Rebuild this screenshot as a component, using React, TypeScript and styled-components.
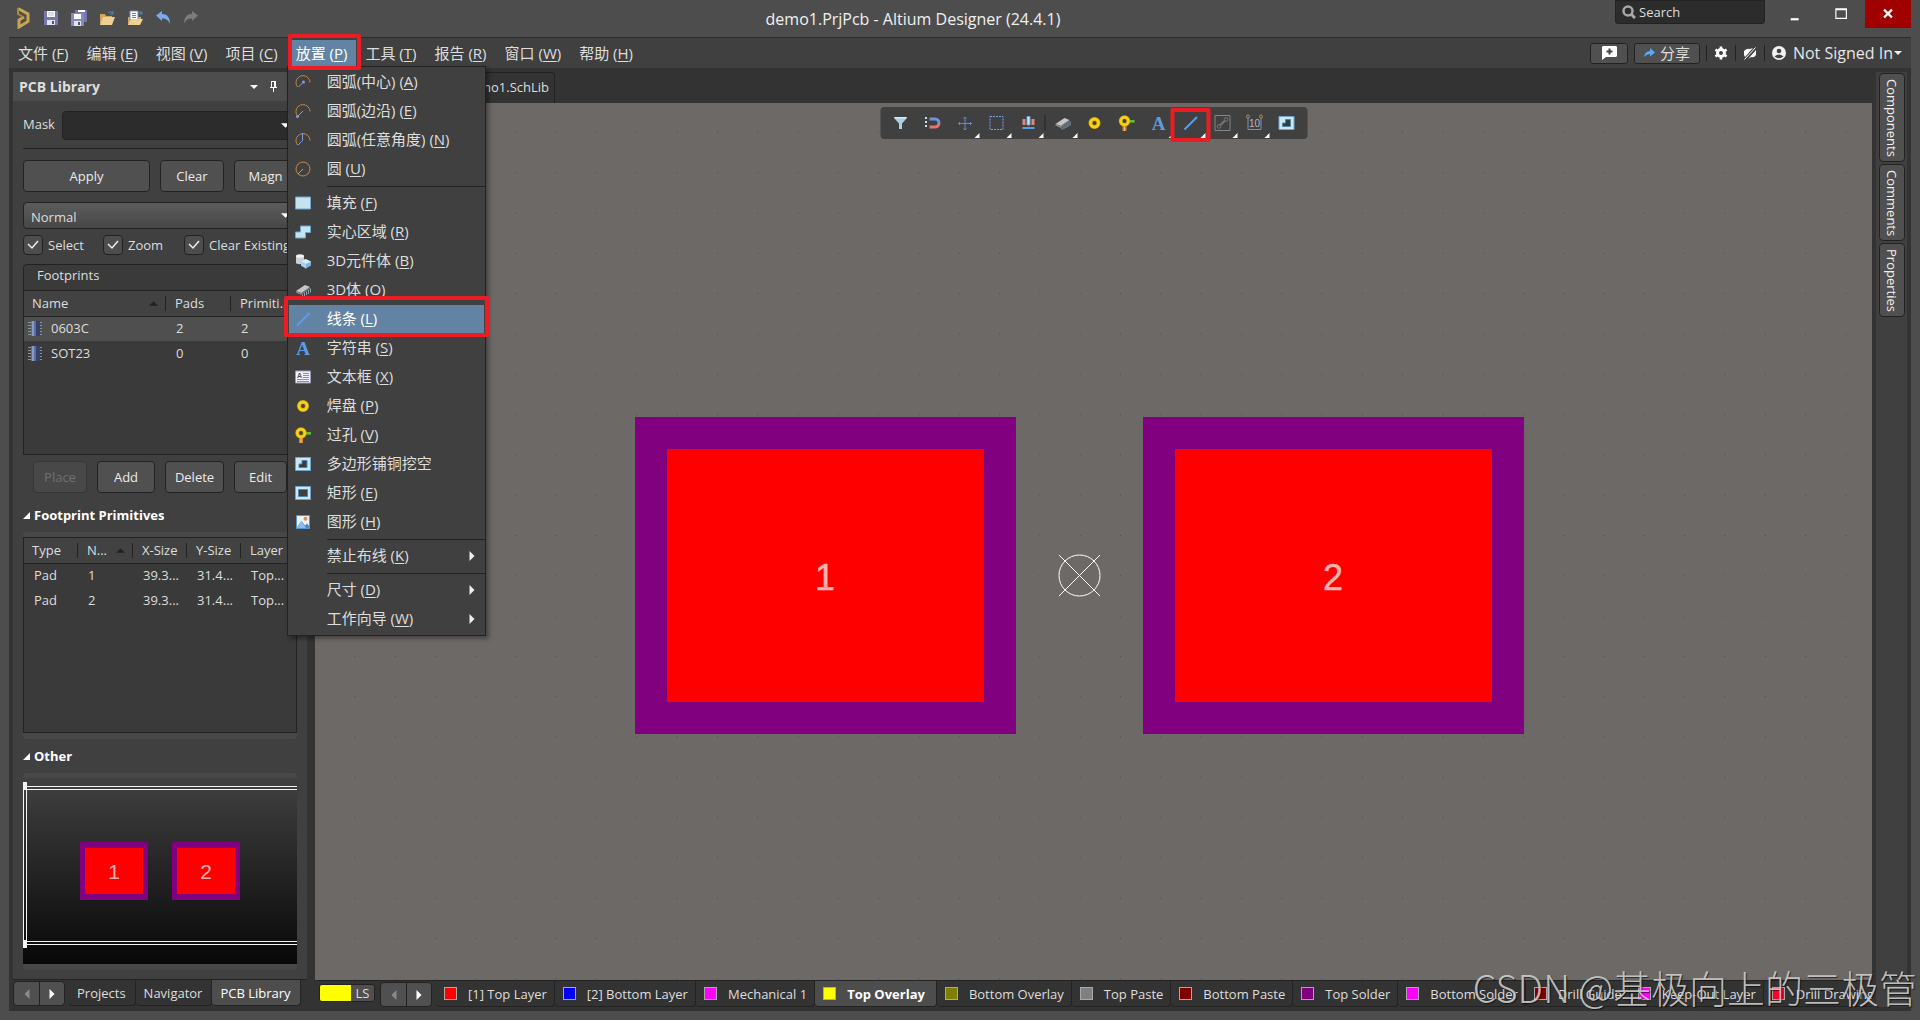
import React from "react";
import styled, { createGlobalStyle, css } from "styled-components";

const c = {
  frame: "#4d4d4d",
  bar: "#404040",
  dark: "#333333",
  line: "#222222",
  field: "#2c2c2c",
  table: "#3a3a3a",
  button: "#505050",
  text: "#dedede",
  hot: "#6283a3",
  mark: "#ed1c24",
};

const GlobalStyle = createGlobalStyle`
  * { box-sizing: border-box; }
  body { margin: 0; background: ${c.frame}; }
  body, button, input, select, table {
    font-family: "Open Sans", "Noto Sans CJK SC", sans-serif;
    font-size: 13px;
    line-height: 20px;
    color: ${c.text};
  }
  button { padding: 0; border: 0; background: none; cursor: default; }
  svg { display: block; flex: none; }
  u { text-underline-offset: 2px; }
`;

/* ---------- frame ---------- */

const Window = styled.div`
  display: flex;
  flex-direction: column;
  height: 100vh;
  min-height: 900px;
  padding: 0 9px 9px;
  background: ${c.frame};
  overflow: hidden;
  position: relative;
`;

const TitleBar = styled.header`
  display: flex;
  align-items: flex-start;
  height: 37px;
`;

const QuickTools = styled.div`
  display: flex;
  align-items: center;
  gap: 12px;
  height: 36px;
  padding: 0 12px 0 6px;
`;

const IconButton = styled.button`
  display: grid;
  place-items: center;
`;

const Title = styled.h1`
  flex: 1;
  margin: 0;
  font-size: 16px;
  font-weight: 400;
  line-height: 38px;
  text-align: center;
  color: #f0f0f0;
`;

const SearchBox = styled.label`
  display: flex;
  align-items: center;
  gap: 3px;
  width: 150px;
  height: 24px;
  padding: 0 6px;
  background: ${c.field};
  border: 1px solid ${c.line};
  border-radius: 0 0 3px 3px;
  input {
    min-width: 0;
    flex: 1;
    padding: 0;
    border: 0;
    outline: 0;
    background: none;
    line-height: 20px;
  }
  input::placeholder { color: ${c.text}; opacity: 1; }
`;

const WindowButtons = styled.div`
  display: flex;
  margin-left: 8px;
`;

const WindowButton = styled.button<{ $close?: boolean }>`
  display: grid;
  place-items: center;
  width: 46px;
  height: 28px;
  background: ${(p) => (p.$close ? "#a00000" : "none")};
`;

const MenuBar = styled.nav`
  display: flex;
  align-items: center;
  gap: 5px;
  height: 31px;
  padding: 0 6px 0 5px;
  background: ${c.bar};
  border-top: 1px solid #2c2c2c;
`;

const MenuSlot = styled.div`
  position: relative;
`;

const MenuTitle = styled.button<{ $open?: boolean }>`
  display: block;
  height: 26px;
  padding: 0 9px 0 4px;
  font-size: 15px;
  line-height: 26px;
  white-space: nowrap;
  background: ${(p) => (p.$open ? c.hot : "none")};
  color: ${(p) => (p.$open ? "#fff" : c.text)};
`;

const Mark = styled.span<{ $inset: string; $w?: number }>`
  position: absolute;
  z-index: 5;
  inset: ${(p) => p.$inset};
  border: ${(p) => p.$w ?? 4}px solid ${c.mark};
  border-radius: 2px;
  pointer-events: none;
`;

const Popup = styled.ul`
  position: absolute;
  z-index: 4;
  top: 100%;
  left: -5px;
  width: 199px;
  margin: 0;
  padding: 1px 0;
  list-style: none;
  background: ${c.bar};
  border: 1px solid ${c.line};
  box-shadow: 3px 3px 4px rgba(0, 0, 0, 0.35);
`;

const PopupRow = styled.li`
  position: relative;
`;

const PopupItem = styled.button<{ $active?: boolean }>`
  display: grid;
  grid-template-columns: 16px 1fr 6px;
  column-gap: 16px;
  align-items: center;
  width: 195px;
  height: 29px;
  margin: 0 1px;
  padding: 0 11px 2px 6px;
  font-size: 15px;
  line-height: 27px;
  text-align: left;
  white-space: nowrap;
  background: ${(p) => (p.$active ? c.hot : "none")};
  color: ${(p) => (p.$active ? "#fff" : c.text)};
`;

const PopupRule = styled.li`
  height: 1px;
  margin: 2px 0 2px 39px;
  background: ${c.line};
`;

const Account = styled.div`
  display: flex;
  align-items: center;
  margin-left: auto;
`;

const SmallButton = styled.button`
  display: flex;
  align-items: center;
  justify-content: center;
  gap: 5px;
  height: 21px;
  margin-right: 6px;
  padding: 0 9px;
  font-size: 15px;
  line-height: 19px;
  background: ${c.button};
  border: 1px solid ${c.line};
  border-radius: 3px;
`;

const AccountItem = styled.button`
  display: flex;
  align-items: center;
  gap: 7px;
  height: 16px;
  padding: 0 7px;
  border-left: 1px solid ${c.line};
  font-size: 16px;
  color: #e6e6e6;
  &:last-child { padding-right: 3px; }
`;

const AccountName = styled.span`
  display: flex;
  align-items: center;
  gap: 1px;
`;

const Work = styled.main`
  flex: 1;
  display: flex;
  min-height: 0;
  padding: 0 4px;
  background: ${c.dark};
`;

/* ---------- library panel ---------- */

const Panel = styled.section`
  display: flex;
  flex-direction: column;
  width: 294px;
  flex: none;
  margin: 4px 8px 5px 0;
`;

const PanelHead = styled.header`
  display: flex;
  align-items: center;
  gap: 12px;
  height: 29px;
  padding: 0 30px 0 6px;
  background: ${c.frame};
  h2 { flex: 1; margin: 0; font-size: 14px; font-weight: 700; }
`;

const PanelBody = styled.div`
  flex: 1;
  display: flex;
  flex-direction: column;
  min-height: 0;
  padding: 10px 10px 9px;
  background: ${c.bar};
`;

const MaskRow = styled.div`
  display: grid;
  grid-template-columns: 39px 1fr;
  line-height: 26px;
`;

const Combo = styled.div`
  display: grid;
  align-items: center;
  > * { grid-area: 1 / 1; }
  > svg { justify-self: end; margin-right: 7px; pointer-events: none; }
`;

const fieldShape = css`
  width: 100%;
  border: 1px solid ${c.line};
  border-radius: 4px;
  outline: 0;
`;

const TextField = styled.input`
  ${fieldShape}
  height: 29px;
  padding: 0 8px;
  background: ${c.field};
`;

const Select = styled.select`
  ${fieldShape}
  appearance: none;
  height: 27px;
  padding: 2px 7px 0;
  background: linear-gradient(#5c5c5c, #474747);
`;

const Rule = styled.hr`
  width: 100%;
  height: 1px;
  margin: 8px 0 11px;
  border: 0;
  background: ${c.line};
`;

const ButtonGrid = styled.div<{ $cols: string; $inset?: boolean }>`
  display: grid;
  grid-template-columns: ${(p) => p.$cols};
  gap: 10px;
  margin: ${(p) => (p.$inset ? "6px 10px 5px" : "0 0 10px")};
`;

const Button = styled.button`
  height: 32px;
  overflow: hidden;
  background: ${c.button};
  border: 1px solid ${c.line};
  border-radius: 4px;
  color: #ececec;
  &:disabled { background: #484848; border-color: #363636; color: #707070; }
`;

const Checks = styled.div`
  display: grid;
  grid-template-columns: 80px 81px 1fr;
  margin: 6px 0 9px;
`;

const CheckLabel = styled.label`
  display: flex;
  align-items: center;
  gap: 5px;
  white-space: nowrap;
`;

const Tick = styled.span`
  display: grid;
  place-items: center;
  > * { grid-area: 1 / 1; }
  input {
    appearance: none;
    width: 20px;
    height: 20px;
    margin: 0;
    background: ${c.frame};
    border: 1px solid ${c.line};
    border-radius: 4px;
  }
  svg { pointer-events: none; }
`;

const Group = styled.div`
  height: 191px;
  background: ${c.table};
  border: 1px solid ${c.line};
  border-radius: 4px 4px 0 0;
`;

const GroupTitle = styled.div`
  height: 26px;
  padding: 0 13px;
  line-height: 21px;
  border-bottom: 1px solid ${c.line};
`;

const Grid = styled.table`
  width: 100%;
  table-layout: fixed;
  border-collapse: collapse;
  th, td {
    height: 25px;
    padding: 0 0 0 9px;
    text-align: left;
    font-weight: 400;
    white-space: nowrap;
    overflow: hidden;
  }
  th {
    border-bottom: 1px solid ${c.line};
    background: linear-gradient(${c.line}, ${c.line}) right center / 1px 15px no-repeat #424242;
  }
  th:first-child { padding-left: 8px; }
  th:last-child { background: #424242; }
  td { padding: 0 0 1px 10px; }
`;

const GridRow = styled.tr<{ $selected?: boolean }>`
  background: ${(p) => (p.$selected ? "#4f4f4f" : "none")};
`;

const SortHead = styled.span`
  display: flex;
  align-items: center;
  justify-content: space-between;
  padding-right: 8px;
`;

const NameCell = styled.span`
  display: flex;
  align-items: center;
  gap: 8px;
  margin-left: -7px;
`;

const Heading = styled.h3`
  display: flex;
  align-items: center;
  gap: 4px;
  height: 34px;
  margin: 0;
  font-size: 13px;
  font-weight: 700;
  color: #fff;
`;

const Shell = styled.div<{ $grow?: boolean }>`
  display: flex;
  flex: ${(p) => (p.$grow ? "1" : "none")};
  min-height: 0;
  padding: 5px 0 6px;
  background: #484848;
  border-radius: 4px;
`;

const GridFrame = styled.div`
  flex: 1;
  background: ${c.table};
  border: 1px solid ${c.line};
`;

const SideTabs = styled.div`
  display: flex;
  height: 27px;
  border-top: 1px solid ${c.line};
`;

const Steps = styled.div`
  display: grid;
  grid-template-columns: 1fr 1fr;
  width: 52px;
  flex: none;
  height: 25px;
  margin: 1px 4px 0 0;
  background: ${c.button};
  border: 1px solid ${c.line};
  border-radius: 4px;
  button + button { border-left: 1px solid ${c.line}; }
`;

const tabShape = css<{ $active?: boolean }>`
  flex: none;
  border: 1px solid ${c.line};
  border-top: 0;
  border-left: 0;
  border-radius: 0 0 4px 4px;
  white-space: nowrap;
  background: ${(p) => (p.$active ? c.frame : c.dark)};
  color: ${(p) => (p.$active ? "#fff" : c.text)};
`;

const SideTab = styled.button<{ $active?: boolean }>`
  ${tabShape}
  padding: 0 9px 0 8px;
`;

/* ---------- editor ---------- */

const Editor = styled.section`
  flex: 1;
  display: flex;
  flex-direction: column;
  min-width: 0;
`;

const DocTabs = styled.div`
  display: flex;
  height: 35px;
  padding-top: 4px;
`;

const DocTab = styled.button`
  width: 240px;
  height: 31px;
  padding: 0 5px 2px;
  text-align: right;
  border: 1px solid ${c.line};
  border-bottom: 0;
  border-radius: 4px 4px 0 0;
`;

const Canvas = styled.div`
  flex: 1;
  position: relative;
  min-height: 0;
  background: #6d6967;
  overflow: hidden;
  > svg { width: 100%; height: 100%; }
`;

const FloatBar = styled.div`
  position: absolute;
  top: 4px;
  left: 50%;
  transform: translateX(-50%);
  display: flex;
  align-items: center;
  height: 32px;
  padding: 0 5px 0 4px;
  background: ${c.bar};
  border-radius: 4px;
`;

const FloatTool = styled.button`
  position: relative;
  display: grid;
  place-items: center;
  width: 32px;
  height: 32px;
`;

const Corner = styled.span`
  position: absolute;
  right: 1px;
  bottom: 1px;
  border-left: 5px solid transparent;
  border-bottom: 5px solid #fff;
`;

const FloatRule = styled.span`
  width: 2px;
  height: 16px;
  border-left: 1px solid ${c.line};
`;

const LayerBar = styled.div`
  display: flex;
  height: 31px;
  padding: 0 0 4px 4px;
  border-top: 1px solid ${c.line};
  overflow: hidden;
`;

const LayerSet = styled.button`
  display: grid;
  grid-template-columns: 31px 23px;
  flex: none;
  height: 18px;
  margin: 3px 5px 0 0;
  line-height: 16px;
  border: 1px solid ${c.line};
  border-radius: 3px;
  background: ${c.button};
  overflow: hidden;
  &::before { content: ""; background: #ff0; }
`;

const LayerTab = styled.button<{ $active?: boolean }>`
  ${tabShape}
  display: flex;
  align-items: center;
  gap: 11px;
  padding: 0 ${(p) => (p.$active ? 11 : 7)}px 0 8px;
  font-weight: ${(p) => (p.$active ? 700 : 400)};
`;

const Swatch = styled.span<{ $color: string }>`
  width: 13px;
  height: 13px;
  border: 1px solid #a8a8a8;
  background: ${(p) => p.$color};
`;

const DockStrip = styled.aside`
  display: flex;
  flex-direction: column;
  align-items: center;
  gap: 2px;
  width: 31px;
  flex: none;
  margin: 4px 0 4px 4px;
  padding-top: 1px;
  background: ${c.bar};
`;

const DockTab = styled.button`
  width: 26px;
  padding: 5px 0 4px;
  writing-mode: vertical-rl;
  line-height: 24px;
  color: #f0f0f0;
  background: ${c.button};
  border: 1px solid ${c.line};
  border-radius: 4px;
`;

const Watermark = styled.div`
  position: absolute;
  z-index: 6;
  right: 3px;
  bottom: 8px;
  font-family: "Noto Sans CJK SC", sans-serif;
  font-size: 38px;
  font-weight: 300;
  line-height: 50px;
  white-space: nowrap;
  color: rgba(215, 215, 215, 0.85);
  text-shadow: 1px 1px 1px rgba(0, 0, 0, 0.6);
  pointer-events: none;
`;

/* ---------- icons ---------- */

const Svg = ({ s = 16, children }: { s?: number; children: React.ReactNode }) => (
  <svg width={s} height={s} viewBox="0 0 16 16" fill="none" overflow="visible" aria-hidden="true">
    {children}
  </svg>
);

const Tri = ({ dir, color = "#fff", s = 8 }: { dir: "up" | "down" | "left" | "right" | "corner"; color?: string; s?: number }) => {
  const d = {
    up: "M0 6h8L4 2z",
    down: "M0 2h8L4 6z",
    left: "M6 0v8L2 4z",
    right: "M2 0v8l4-4z",
    corner: "M8 0v8H0z",
  }[dir];
  return (
    <svg width={s} height={s} viewBox="0 0 8 8" aria-hidden="true">
      <path d={d} fill={color} />
    </svg>
  );
};

const arcD = "M2.5 13A7 7 0 1 1 15 8.5";
const gold = "#c9893c";
const blue = "#7d9fe8";

const icons: Record<string, React.ReactNode> = {
  arcCenter: <Svg><path d={arcD} stroke={gold} /><path d="M3.5 13 8 8.500" stroke={blue} /><circle cx="8.500" cy="8" r="1.500" fill={blue} /></Svg>,
  arcEdge: <Svg><path d={arcD} stroke={gold} /><path d="M3 13 8 8" stroke={blue} /><circle cx="2.500" cy="13.500" r="1.500" fill={blue} /></Svg>,
  arcAny: <Svg><path d={arcD} stroke={gold} /><path d="M3 13 7.500 8.500V1" stroke={blue} /></Svg>,
  circle: <Svg><circle cx="8" cy="8" r="7" stroke={gold} /><path d="M3 13 8 8" stroke={blue} /></Svg>,
  fill: <Svg><path d="M.5 2h15v12H.500z" fill="#c3e3ee" stroke="#6fa6d0" /></Svg>,
  region: <Svg><path d="M5.500 2h10v6.500h-5V14H.500V8h5z" fill="#c3e3ee" stroke="#6fa6d0" /></Svg>,
  body3d: <Svg><path d="M1 3v7c0 1.500 7 1.500 8 0V3z" fill="#c9cfd3" /><ellipse cx="5" cy="3" rx="4" ry="1.800" fill="#f1f4f5" /><path d="M6 8.500 10.500 6 16 8.500v4L11 15.500l-5-3z" fill="#7fb4dc" /><path d="M6 8.500 10.500 6 16 8.500l-5 2.500z" fill="#d5edf8" /><path d="M11 11v4.500l-5-3v-4z" fill="#a9d3ec" /></Svg>,
  chip3d: <Svg><path d="M1 9 10 3l5 2-8.500 6z" fill="#c4c6c8" /><path d="M1 9 6.500 11v2L1 10.500z" fill="#8b8d90" /><path d="M6.500 11 15 5v1.500L6.500 13z" fill="#777" /><path d="M7.500 12.500v2M9.500 11v3M11.500 9.500v3.500M13.500 8v4M15.500 6.500v4" stroke="#7fa9b8" /></Svg>,
  line: <Svg><path d="M2 14.500 14.500 2" stroke="#5c9ce6" strokeWidth="2" /></Svg>,
  letter: <Svg><text x="8" y="15" textAnchor="middle" fontFamily="Liberation Serif, serif" fontWeight="700" fontSize="19" fill="#5c9ce6">A</text></Svg>,
  frame: <Svg><path d="M.5 2h15v12H.500z" fill="#f2f2fa" stroke="#9a9abf" /><text x="2" y="9" fontFamily="Liberation Sans, sans-serif" fontWeight="700" fontSize="7" fill="#555">A</text><path d="M8 4.500h6M8 6.500h6M8 8.500h6M2 10.500h12M2 12.500h12" stroke="#8a8ab0" /></Svg>,
  pad: <Svg><circle cx="8" cy="8" r="4" stroke="#d9a400" strokeWidth="4" /><circle cx="8" cy="8" r="4" stroke="#f6d21c" strokeWidth="2.500" /></Svg>,
  via: <Svg><path d="M8 6.500h8" stroke="#4a9a2a" strokeWidth="3" /><path d="M9 6h7" stroke="#8fd070" /><path d="M6 9v7" stroke="#d9822b" strokeWidth="4" /><path d="M6 10v6" stroke="#f3c27a" /><circle cx="6" cy="6" r="3.800" fill="#404040" stroke="#d9a400" strokeWidth="3.800" /><circle cx="6" cy="6" r="3.800" stroke="#f6d21c" strokeWidth="2.400" /></Svg>,
  cutout: <Svg><path d="M.5 1.500h15v13H.500z" fill="#c9e8f3" stroke="#6fa6d0" /><path d="M7 4.500h5v7H4V8h3z" fill="#3a3a3a" stroke="#4d86b4" /></Svg>,
  rect: <Svg><path d="M.5 1.500h15v13H.500z" fill="#c9e8f3" stroke="#6fa6d0" /><path d="M3.500 4.500h9v7h-9z" fill="#3f3f3f" stroke="#4d86b4" /></Svg>,
  image: <Svg><path d="M1.500 1.500h13v13h-13z" fill="#e8f3fb" stroke="#5b93cc" /><path d="M2 13 6.500 7l3.500 4.500 2-2L14 12v2H2z" fill="#4d86c4" /><path d="M2 13 6.500 7 11 14H2z" fill="#8fbbe6" /><circle cx="10.500" cy="4.800" r="2" fill="#ee8a4a" /></Svg>,
  filter: <Svg><path d="M2 2h12v1.500L9.500 8.500V14h-3V8.500L2 3.500z" fill="#a9cfe2" /><path d="M2 2h12v1.500H2z" fill="#d6edf6" /></Svg>,
  magnet: <Svg><path d="M5 4h5.500a4 4 0 0 1 4 4" stroke="#6f93dd" strokeWidth="3" /><path d="M5 12h5.500a4 4 0 0 0 4-4" stroke="#e57373" strokeWidth="3" /><path d="M1.500 2v12" stroke="#c9e0ea" strokeWidth="2" strokeDasharray="2 2" /></Svg>,
  move: <Svg><path d="M8.500 2v13M2 8.500h13" stroke="#6488d8" /><path d="M7 3.500 8.500 2 10 3.500M7 13.500 8.500 15 10 13.500M3.500 7 2 8.500 3.500 10M13.500 7 15 8.500 13.500 10" stroke="#6488d8" /></Svg>,
  select: <Svg><path d="M1.500 1.500h13v13h-13z" stroke="#7d9fe8" strokeDasharray="2 1" /></Svg>,
  align: <Svg><path d="M2 4h3v6H2zM11 4h3v6h-3z" fill="#e88080" /><path d="M6.500 1.500h3V10h-3z" fill="#c9e8f3" stroke="#6fa6d0" /><path d="M2 13h12" stroke="#5c9ce6" strokeWidth="2" /></Svg>,
  measure: <Svg><path d="M.5.500h15v15H.500z" stroke="#858585" /><path d="m5.500 10.500 5-5" stroke="#777" strokeWidth="2" /><circle cx="4.500" cy="11.500" r="1.800" stroke="#777" /><circle cx="11.500" cy="4.500" r="1.800" stroke="#777" /></Svg>,
  dimension: <Svg><path d="M1.500 3v11.500h13V3" stroke="#6f93cc" /><circle cx="1.500" cy="1.500" r="1.500" stroke={gold} /><circle cx="14.500" cy="1.500" r="1.500" stroke={gold} /><text x="8" y="12" textAnchor="middle" fontFamily="Liberation Sans, sans-serif" fontSize="10" fill="#b8b8b8">10</text></Svg>,
};

const Footprint = () => (
  <Svg>
    <path d="M1 2.500h14M1 5.500h14M1 8.500h14M1 11.500h14M1 14.500h14" stroke="#8b9696" />
    <path d="M4 1h9v15H4z" fill="#35406c" />
    <path d="M4 1h5v15H4z" fill="#5d6d9f" />
    <path d="M5 1h2v15H5z" fill="#8a9ac4" />
  </Svg>
);

const quick: [string, React.ReactNode][] = [
  ["Save", <Svg><path d="M1 1h14v14H1z" fill="#7777b0" /><path d="M4 1h8v6H4z" fill="#fff" /><path d="M4 10h8v5H4z" fill="#dfe5ea" /><path d="M9 11h2v3H9z" fill="#555" /><path d="M5 3h6M5 5h6" stroke="#b5c4d0" /></Svg>],
  ["Save all", <Svg><path d="M4 0h12v12H4z" fill="#7777b0" /><path d="M7 0h7v2H7z" fill="#fff" /><path d="M0 3h13v13H0z" fill="#8888c0" /><path d="M3 4h7v5H3z" fill="#fff" /><path d="M3 11h7v5H3z" fill="#dfe5ea" /><path d="M7 12h2v3H7z" fill="#555" /></Svg>],
  ["Open", <Svg><path d="M1 14V4h5l1 2h6v2" fill="#cda75c" /><path d="m1 15 3-8h12l-3 8z" fill="#f0d090" /><path d="M9 3q3-3 5 1M14 1v3h-3" stroke="#4d8bc0" /></Svg>],
  ["Open project", <Svg><path d="M1 15V7h13v3" fill="#cda75c" /><path d="M3 1h8v9H3z" fill="#fff" stroke="#6f93cc" /><path d="M5 3.500h4M5 5.500h4M5 7.500h4" stroke="#5c8cc8" /><path d="m1 15 3-6h12l-3 6z" fill="#f0d090" /><path d="M12 3h4M14 1v4" stroke="#4d8bc0" /></Svg>],
  ["Undo", <Svg><path d="M1 5.500 7 1v3c5 0 8 3 8 10-1.500-4-4-5.500-8-5.500V11z" fill="#79aaf0" /></Svg>],
  ["Redo", <Svg><path d="M15 5.500 9 1v3c-5 0-8 3-8 10 1.500-4 4-5.500 8-5.500V11z" fill="#7c7c7c" /></Svg>],
];

/* ---------- data ---------- */

const menus: [string, string][] = [
  ["文件", "F"], ["编辑", "E"], ["视图", "V"], ["项目", "C"], ["放置", "P"],
  ["工具", "T"], ["报告", "R"], ["窗口", "W"], ["帮助", "H"],
];

type Entry = { icon?: string; text: string; k?: string; sub?: boolean; active?: boolean } | null;

const placeMenu: Entry[] = [
  { icon: "arcCenter", text: "圆弧(中心)", k: "A" },
  { icon: "arcEdge", text: "圆弧(边沿)", k: "E" },
  { icon: "arcAny", text: "圆弧(任意角度)", k: "N" },
  { icon: "circle", text: "圆", k: "U" },
  null,
  { icon: "fill", text: "填充", k: "F" },
  { icon: "region", text: "实心区域", k: "R" },
  { icon: "body3d", text: "3D元件体", k: "B" },
  { icon: "chip3d", text: "3D体", k: "O" },
  { icon: "line", text: "线条", k: "L", active: true },
  { icon: "letter", text: "字符串", k: "S" },
  { icon: "frame", text: "文本框", k: "X" },
  { icon: "pad", text: "焊盘", k: "P" },
  { icon: "via", text: "过孔", k: "V" },
  { icon: "cutout", text: "多边形铺铜挖空" },
  { icon: "rect", text: "矩形", k: "E" },
  { icon: "image", text: "图形", k: "H" },
  null,
  { text: "禁止布线", k: "K", sub: true },
  null,
  { text: "尺寸", k: "D", sub: true },
  { text: "工作向导", k: "W", sub: true },
];

const tools: { icon: string; more?: boolean; rule?: boolean; marked?: boolean }[] = [
  { icon: "filter" },
  { icon: "magnet" },
  { icon: "move", more: true },
  { icon: "select", more: true },
  { icon: "align", more: true, rule: true },
  { icon: "chip3d", more: true },
  { icon: "pad" },
  { icon: "via" },
  { icon: "letter", more: true },
  { icon: "line", more: true, marked: true },
  { icon: "measure", more: true },
  { icon: "dimension", more: true },
  { icon: "cutout" },
];

const layers: [string, string][] = [
  ["[1] Top Layer", "#ff0000"],
  ["[2] Bottom Layer", "#0000ff"],
  ["Mechanical 1", "#ff00ff"],
  ["Top Overlay", "#ffff00"],
  ["Bottom Overlay", "#808000"],
  ["Top Paste", "#808080"],
  ["Bottom Paste", "#800000"],
  ["Top Solder", "#800080"],
  ["Bottom Solder", "#ff00ff"],
  ["Drill Guide", "#800000"],
  ["Keep-Out Layer", "#ff00ff"],
  ["Drill Drawing", "#ff002b"],
];

const Key = ({ k }: { k?: string }) => (k ? <> (<u>{k}</u>)</> : null);

const Stepper = ({ name }: { name: string }) => (
  <Steps>
    <IconButton aria-label={`Previous ${name}`}><Tri dir="left" color="#8a8a8a" s={10} /></IconButton>
    <IconButton aria-label={`Next ${name}`}><Tri dir="right" s={10} /></IconButton>
  </Steps>
);

/* ---------- parts ---------- */

const PlaceMenu = () => (
  <Popup>
    {placeMenu.map((m, i) =>
      m === null ? (
        <PopupRule key={i} />
      ) : (
        <PopupRow key={i}>
          <PopupItem $active={m.active}>
            <span>{m.icon && icons[m.icon]}</span>
            <span>{m.text}<Key k={m.k} /></span>
            {m.sub && <Tri dir="right" color="#eee" s={10} />}
          </PopupItem>
          {m.active && <Mark $inset="-9px -4px -3px -4px" />}
        </PopupRow>
      )
    )}
  </Popup>
);

const Preview = () => (
  <svg width="100%" height="186" viewBox="0 0 274 186" preserveAspectRatio="xMinYMin slice">
    <defs>
      <linearGradient id="shade" x1="0" y1="0" x2="0" y2="1">
        <stop offset="0" stopColor="#404040" />
        <stop offset="1" stopColor="#080808" />
      </linearGradient>
    </defs>
    <rect width="274" height="186" fill="url(#shade)" />
    <path d="M0 8.500h274M0 11.500h274M0 163.500h274M0 166.500h274M.5 4v166M3.500 4v166" stroke="#f4f4f4" />
    <path d="M0 4h4v8H0zM0 162h4v8H0z" fill="#f4f4f4" />
    {[57, 149].map((x, i) => (
      <g key={x}>
        <rect x={x} y="64" width="68" height="58" fill="#800080" />
        <rect x={x + 5} y="70" width="58" height="46" fill="#f00" />
        <text x={x + 34} y="101" textAnchor="middle" fontFamily="Liberation Sans, sans-serif" fontSize="21" fill="#ffb0b0">{i + 1}</text>
      </g>
    ))}
  </svg>
);

const Board = () => (
  <svg viewBox="0 0 1557 877" preserveAspectRatio="xMidYMid slice">
    <defs>
      <pattern id="dots" width="40.300" height="40.300" x="-1" y="29" patternUnits="userSpaceOnUse">
        <rect width="1" height="1" fill="#4c4a52" />
      </pattern>
    </defs>
    <rect width="1557" height="877" fill="url(#dots)" />
    {[320, 828].map((x, i) => (
      <g key={x}>
        <rect x={x} y="314" width="381" height="317" fill="#800080" />
        <rect x={x + 32} y="346" width="317" height="253" fill="#f00" />
        <text x={x + 190} y="487" textAnchor="middle" fontFamily="Liberation Sans, sans-serif" fontSize="36" fill="#ffb0b0" stroke="#ffb0b0" strokeWidth="0.500">{i + 1}</text>
      </g>
    ))}
    <circle cx="764.500" cy="472.500" r="20.500" fill="none" stroke="#fff" />
    <path d="m744 452 41 41M785 452l-41 41" stroke="#fff" />
  </svg>
);

const Checkbox = ({ label }: { label: string }) => (
  <CheckLabel>
    <Tick>
      <input type="checkbox" defaultChecked />
      <svg width="12" height="10" viewBox="0 0 12 10" fill="none"><path d="m1 4 4 4 6-7" stroke="#eee" strokeWidth="1.500" /></svg>
    </Tick>
    {label}
  </CheckLabel>
);

const LibraryPanel = () => (
  <Panel>
    <PanelHead>
      <h2>PCB Library</h2>
      <Tri dir="down" />
      <svg width="7" height="11" viewBox="0 0 7 11" fill="none"><path d="M1 .5h5M1.500 1v5M5 1v5M0 6.500h7M3.500 7v4" stroke="#fff" /><path d="M4 1h2v5H4z" fill="#fff" /></svg>
    </PanelHead>
    <PanelBody>
      <MaskRow>
        <label htmlFor="mask">Mask</label>
        <Combo>
          <TextField id="mask" />
          <Tri dir="down" s={9} />
        </Combo>
      </MaskRow>
      <Rule />
      <ButtonGrid $cols="127fr 64fr 63fr">
        <Button>Apply</Button>
        <Button>Clear</Button>
        <Button>Magn</Button>
      </ButtonGrid>
      <Combo>
        <Select aria-label="Mode"><option>Normal</option></Select>
        <Tri dir="down" s={9} />
      </Combo>
      <Checks>
        <Checkbox label="Select" />
        <Checkbox label="Zoom" />
        <Checkbox label="Clear Existing" />
      </Checks>
      <Group>
        <GroupTitle>Footprints</GroupTitle>
        <Grid>
          <colgroup><col width="142" /><col width="65" /><col /></colgroup>
          <thead>
            <tr>
              <th><SortHead>Name<Tri dir="up" color="#222" s={9} /></SortHead></th>
              <th>Pads</th>
              <th>Primiti...</th>
            </tr>
          </thead>
          <tbody>
            <GridRow $selected>
              <td><NameCell><Footprint />0603C</NameCell></td><td>2</td><td>2</td>
            </GridRow>
            <GridRow>
              <td><NameCell><Footprint />SOT23</NameCell></td><td>0</td><td>0</td>
            </GridRow>
          </tbody>
        </Grid>
      </Group>
      <ButtonGrid $cols="54fr 58fr 59fr 53fr" $inset>
        <Button disabled>Place</Button>
        <Button>Add</Button>
        <Button>Delete</Button>
        <Button>Edit</Button>
      </ButtonGrid>
      <Heading><Tri dir="corner" s={7} />Footprint Primitives</Heading>
      <Shell $grow>
        <GridFrame>
          <Grid>
            <colgroup><col width="54" /><col width="55" /><col width="54" /><col width="54" /><col /></colgroup>
            <thead>
              <tr>
                <th>Type</th>
                <th><SortHead>N...<Tri dir="up" color="#222" s={9} /></SortHead></th>
                <th>X-Size</th>
                <th>Y-Size</th>
                <th>Layer</th>
              </tr>
            </thead>
            <tbody>
              {["1", "2"].map((n) => (
                <GridRow key={n}>
                  <td>Pad</td><td>{n}</td><td>39.3...</td><td>31.4...</td><td>Top...</td>
                </GridRow>
              ))}
            </tbody>
          </Grid>
        </GridFrame>
      </Shell>
      <Heading><Tri dir="corner" s={7} />Other</Heading>
      <Shell><Preview /></Shell>
    </PanelBody>
    <SideTabs>
      <Stepper name="panel" />
      <SideTab>Projects</SideTab>
      <SideTab>Navigator</SideTab>
      <SideTab $active>PCB Library</SideTab>
    </SideTabs>
  </Panel>
);

export default function App() {
  return (
    <>
      <GlobalStyle />
      <Window>
        <TitleBar>
          <QuickTools>
            <svg width="16" height="22" viewBox="0 0 16 22" fill="none">
              <path d="M3 1.500 13 7v7.500L4 20v-7l5-3" stroke="#c8a550" strokeWidth="3" />
              <path d="M3 1v6l5 3" stroke="#a98838" strokeWidth="2" />
            </svg>
            {quick.map(([name, icon]) => (
              <IconButton key={name} aria-label={name}>{icon}</IconButton>
            ))}
          </QuickTools>
          <Title>demo1.PrjPcb - Altium Designer (24.4.1)</Title>
          <SearchBox>
            <svg width="14" height="14" viewBox="0 0 14 14" fill="none"><circle cx="6" cy="6" r="4.500" stroke="#a8a8a8" strokeWidth="2.500" /><path d="m9 9 4 4" stroke="#a8a8a8" strokeWidth="3" /></svg>
            <input type="text" placeholder="Search" aria-label="Search" />
          </SearchBox>
          <WindowButtons>
            <WindowButton aria-label="Minimize"><Svg s={14}><path d="M2 14h9" stroke="#fff" strokeWidth="2.500" /></Svg></WindowButton>
            <WindowButton aria-label="Maximize"><Svg s={14}><path d="M1 2h12v11H1zM1 3h12" stroke="#fff" strokeWidth="1.300" /></Svg></WindowButton>
            <WindowButton $close aria-label="Close"><Svg s={14}><path d="m3.500 3 9 9M12.500 3l-9 9" stroke="#fff" strokeWidth="2.600" /></Svg></WindowButton>
          </WindowButtons>
        </TitleBar>

        <MenuBar>
          {menus.map(([name, k]) => {
            const open = name === "放置";
            return (
              <MenuSlot key={name}>
                <MenuTitle $open={open}>{name}<Key k={k} /></MenuTitle>
                {open && <PlaceMenu />}
                {open && <Mark $inset="-6px -5px -4px -4px" />}
              </MenuSlot>
            );
          })}
          <Account>
            <SmallButton aria-label="Add comment">
              <svg width="18" height="14" viewBox="0 0 18 14"><path d="M3 0h13l1 1v9l-1 1H6l-4 3V1z" fill="#fff" /><path d="M9.500 2.500v6M6.500 5.500h6" stroke="#444" strokeWidth="2" /></svg>
            </SmallButton>
            <SmallButton>
              <svg width="11" height="10" viewBox="0 0 11 10"><path d="M0 9q1-6 6-6V0l5 4.500L6 8.500V6Q3 6 0 9z" fill="#5aa9f7" /></svg>
              分享
            </SmallButton>
            <AccountItem aria-label="Settings">
              <svg width="14" height="14" viewBox="0 0 14 14" fill="none"><circle cx="7" cy="7" r="3.500" stroke="#fff" strokeWidth="3" /><path d="M7 .5v2M7 11.500v2M1.400 3.700l1.700 1M10.900 9.300l1.700 1M1.400 10.300l1.700-1M10.900 4.700l1.700-1" stroke="#fff" strokeWidth="2.600" /></svg>
            </AccountItem>
            <AccountItem aria-label="Notifications">
              <svg width="14" height="13" viewBox="0 0 14 13"><path d="M1 4q3-3 6-2l3-1-8 9-1-2z" fill="#fff" /><path d="M13 4v4q-2 3-5 2l-3 2 8-9z" fill="#fff" /><path d="M1.500 12.500 12.500.5" stroke="#fff" strokeWidth="1" /></svg>
            </AccountItem>
            <AccountItem>
              <svg width="14" height="14" viewBox="0 0 14 14"><circle cx="7" cy="7" r="7" fill="#f2f2f2" /><circle cx="7" cy="5" r="2.300" fill="#404040" /><path d="M2.500 10.500q4.500-4 9 0-4.500 3.500-9 0z" fill="#404040" /></svg>
              <AccountName>Not Signed In<Tri dir="down" color="#eee" /></AccountName>
            </AccountItem>
          </Account>
        </MenuBar>

        <Work>
          <LibraryPanel />
          <Editor>
            <DocTabs><DocTab>demo1.SchLib</DocTab></DocTabs>
            <Canvas>
              <Board />
              <FloatBar>
                {tools.map((t, i) => (
                  <React.Fragment key={i}>
                    <FloatTool aria-label={t.icon}>
                      {icons[t.icon]}
                      {t.more && <Corner />}
                      {t.marked && <Mark $inset="1px -4px -3px -4px" />}
                    </FloatTool>
                    {t.rule && <FloatRule />}
                  </React.Fragment>
                ))}
              </FloatBar>
            </Canvas>
            <LayerBar>
              <LayerSet>LS</LayerSet>
              <Stepper name="layer" />
              {layers.map(([name, color]) => (
                <LayerTab key={name} $active={name === "Top Overlay"}>
                  <Swatch $color={color} />
                  {name}
                </LayerTab>
              ))}
            </LayerBar>
          </Editor>
          <DockStrip>
            <DockTab>Components</DockTab>
            <DockTab>Comments</DockTab>
            <DockTab>Properties</DockTab>
          </DockStrip>
        </Work>
        <Watermark>CSDN @基极向上的三极管</Watermark>
      </Window>
    </>
  );
}
